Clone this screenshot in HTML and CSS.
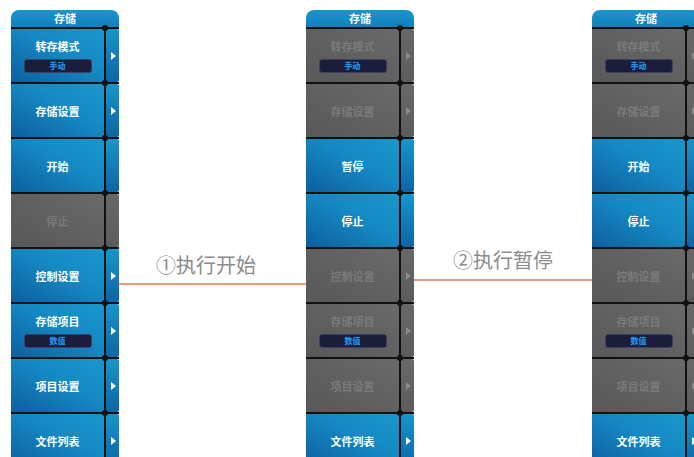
FILE: index.html
```html
<!DOCTYPE html>
<html lang="zh">
  <head>
    <meta charset="UTF-8" />
    <meta name="viewport" content="width=device-width, initial-scale=1.0" />
    <title>存储</title>
    <link rel="stylesheet" href="styles.css">
  </head>
  <body>
    <div class="stage">

      <!-- panel 1 -->
      <div class="panel">
        <div class="panel-head">存储</div>
        <div class="row">
          <div class="main"><span class="title">转存模式</span><span class="badge">手动</span></div>
          <div class="tab"><span class="arrow"></span></div>
        </div>
        <div class="row">
          <div class="main"><span class="title">存储设置</span></div>
          <div class="tab"><span class="arrow"></span></div>
        </div>
        <div class="row">
          <div class="main"><span class="title">开始</span></div>
          <div class="tab"></div>
        </div>
        <div class="row off">
          <div class="main"><span class="title">停止</span></div>
          <div class="tab"></div>
        </div>
        <div class="row">
          <div class="main"><span class="title">控制设置</span></div>
          <div class="tab"><span class="arrow"></span></div>
        </div>
        <div class="row">
          <div class="main"><span class="title">存储项目</span><span class="badge">数值</span></div>
          <div class="tab"><span class="arrow"></span></div>
        </div>
        <div class="row">
          <div class="main"><span class="title">项目设置</span></div>
          <div class="tab"><span class="arrow"></span></div>
        </div>
        <div class="row">
          <div class="main"><span class="title">文件列表</span></div>
          <div class="tab"><span class="arrow"></span></div>
        </div>
      </div>

      <div class="connector first">
        <div class="step">①执行开始</div>
        <div class="line"></div>
      </div>

      <!-- panel 2 -->
      <div class="panel">
        <div class="panel-head">存储</div>
        <div class="row off">
          <div class="main"><span class="title">转存模式</span><span class="badge">手动</span></div>
          <div class="tab"><span class="arrow"></span></div>
        </div>
        <div class="row off">
          <div class="main"><span class="title">存储设置</span></div>
          <div class="tab"><span class="arrow"></span></div>
        </div>
        <div class="row">
          <div class="main"><span class="title">暂停</span></div>
          <div class="tab"></div>
        </div>
        <div class="row">
          <div class="main"><span class="title">停止</span></div>
          <div class="tab"></div>
        </div>
        <div class="row off">
          <div class="main"><span class="title">控制设置</span></div>
          <div class="tab"><span class="arrow"></span></div>
        </div>
        <div class="row off">
          <div class="main"><span class="title">存储项目</span><span class="badge">数值</span></div>
          <div class="tab"><span class="arrow"></span></div>
        </div>
        <div class="row off">
          <div class="main"><span class="title">项目设置</span></div>
          <div class="tab"><span class="arrow"></span></div>
        </div>
        <div class="row">
          <div class="main"><span class="title">文件列表</span></div>
          <div class="tab"><span class="arrow"></span></div>
        </div>
      </div>

      <div class="connector second">
        <div class="step">②执行暂停</div>
        <div class="line"></div>
      </div>

      <!-- panel 3 -->
      <div class="panel">
        <div class="panel-head">存储</div>
        <div class="row off">
          <div class="main"><span class="title">转存模式</span><span class="badge">手动</span></div>
          <div class="tab"><span class="arrow"></span></div>
        </div>
        <div class="row off">
          <div class="main"><span class="title">存储设置</span></div>
          <div class="tab"><span class="arrow"></span></div>
        </div>
        <div class="row">
          <div class="main"><span class="title">开始</span></div>
          <div class="tab"></div>
        </div>
        <div class="row">
          <div class="main"><span class="title">停止</span></div>
          <div class="tab"></div>
        </div>
        <div class="row off">
          <div class="main"><span class="title">控制设置</span></div>
          <div class="tab"><span class="arrow"></span></div>
        </div>
        <div class="row off">
          <div class="main"><span class="title">存储项目</span><span class="badge">数值</span></div>
          <div class="tab"><span class="arrow"></span></div>
        </div>
        <div class="row off">
          <div class="main"><span class="title">项目设置</span></div>
          <div class="tab"><span class="arrow"></span></div>
        </div>
        <div class="row">
          <div class="main"><span class="title">文件列表</span></div>
          <div class="tab"><span class="arrow"></span></div>
        </div>
      </div>

    </div>
  </body>
</html>
```

FILE: styles.css
```css
body {
  margin: 0;
  background-color: #ffffff;
  font-family: "Noto Sans CJK SC", "Noto Sans", sans-serif;
  overflow: hidden;
  height: 457px;
}

.stage {
  display: flex;
  padding-left: 11px;
  height: 457px;
  overflow: hidden;
}

.panel {
  flex: none;
  width: 108px;
  margin-top: 10px;
}

.panel-head {
  height: 17px;
  line-height: 17px;
  text-align: center;
  color: #ffffff;
  font-size: 11px;
  font-weight: bold;
  border-radius: 8px 8px 0 0;
  background: linear-gradient(to bottom, #1a95cc, #1180bd);
}

.row {
  position: relative;
  display: flex;
  height: 53px;
  border-top: 2px solid #111;
}

.row::before {
  content: "";
  position: absolute;
  left: 91px;
  top: -4px;
  width: 6px;
  height: 6px;
  border-radius: 50%;
  background-color: #111;
}

.main {
  width: 93px;
  display: flex;
  flex-direction: column;
  align-items: center;
  justify-content: center;
  gap: 6px;
  background: linear-gradient(to top right, #0c5f9f, #1588c2 55%, #1a97cc);
}

.tab {
  width: 13px;
  border-left: 2px solid #111;
  border-radius: 0 2px 2px 0;
  display: flex;
  align-items: center;
  justify-content: center;
  background: linear-gradient(to bottom, #1896cc, #1178b6 60%, #0d65a4);
}

.title {
  color: #ffffff;
  font-size: 11px;
  font-weight: bold;
  line-height: 14px;
}

.badge {
  width: 66px;
  height: 12px;
  line-height: 12px;
  text-align: center;
  border: 1px solid #3b4062;
  border-radius: 3px;
  background-color: #1b1d3a;
  color: #2094ec;
  font-size: 8px;
  font-weight: 900;
}

.arrow {
  width: 0;
  height: 0;
  margin-left: 1px;
  border-top: 4px solid transparent;
  border-bottom: 4px solid transparent;
  border-left: 5px solid #ffffff;
}

.row.off .main {
  background: linear-gradient(to top right, #585858, #626262 60%, #6a6a6a);
}

.row.off .tab {
  background: linear-gradient(to bottom, #686868, #5c5c5c);
}

.row.off .title {
  color: #7b7b7b;
}

.row.off .arrow {
  border-left-color: #8a8a8a;
}

.connector {
  flex: none;
  display: flex;
  flex-direction: column;
}

.connector.first {
  width: 187px;
  padding-top: 253px;
}

.connector.second {
  width: 178px;
  padding-top: 248px;
}

.step {
  height: 24px;
  line-height: 24px;
  text-align: center;
  color: #8b8b8b;
  font-size: 20px;
}

.connector.first .step {
  padding-right: 13px;
}

.line {
  height: 2px;
  background-color: #ec9a86;
}

.connector.first .line {
  margin-top: 6px;
}

.connector.second .line {
  margin-top: 7px;
}
```
